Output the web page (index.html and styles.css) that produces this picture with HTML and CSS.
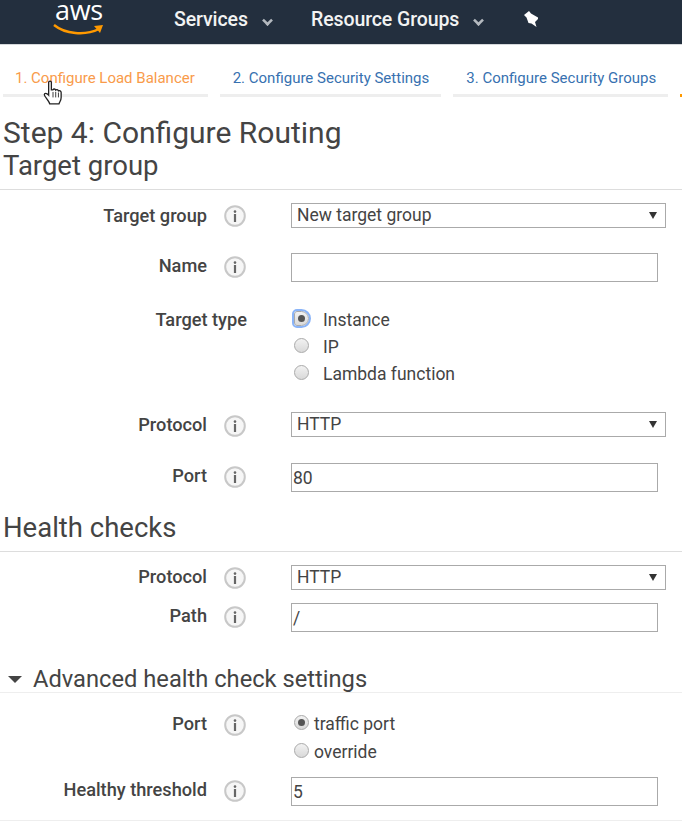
FILE: index.html
```html
<!doctype html>
<html>
<head>
<title>Step 4: Configure Routing</title>
<meta charset="utf-8" />
<link rel="stylesheet" href="styles.css">
</head>
<body>
<svg class="defs" width="0" height="0">
<symbol id="info" viewBox="0 0 22 22">
<circle cx="11" cy="11" r="9.8" fill="#f6f6f6" stroke="#c8c8c8" stroke-width="2"/>
<circle cx="11" cy="6.6" r="1.3" fill="#666"/>
<rect x="9.9" y="9" width="2.2" height="8" fill="#666"/>
</symbol>
</svg>

<header class="topbar">
<div class="logo">
<span class="logo-text">aws</span>
<svg class="smile" width="52" height="14" viewBox="0 0 52 14">
<path d="M1 2 C12 11 32 13 46 6" fill="none" stroke="#f90" stroke-width="2.4"/>
<path d="M41 3 L50 2 L47 10 Z" fill="#f90"/>
</svg>
</div>
<nav class="menu">
<a class="services">Services <i class="chev"></i></a>
<a class="groups">Resource Groups <i class="chev"></i></a>
<svg class="pin" width="16" height="18" viewBox="0 0 16 18">
<path d="M1 5 L6 1 L8 3.500 L15 7.500 L15 9 L12 12 L13.500 17 L8.500 13.500 L5.500 13 L3.500 7.500 Z" fill="#fff"/>
</svg>
</nav>
</header>

<ul class="tabs">
<li class="tab active">1. Configure Load Balancer</li>
<li class="tab second">2. Configure Security Settings</li>
<li class="tab third">3. Configure Security Groups</li>
<li class="tab rest"></li>
</ul>

<svg class="cursor" width="20" height="25" viewBox="0 0 18 23">
<path d="M5 2 C5 .8 7.500 .8 7.500 2 L7.500 9 L9 9 C9.500 8 11 8 11.500 9.300 C12 8.500 13.500 8.700 14 10 C15 9.500 16.500 10 16.500 11.500 L16.500 16 C16.500 19 15 20 14.500 22 L6 22 C5.500 19.500 1 15 1 13.500 C1 12 3 11.500 5 14 Z" fill="#fff" stroke="#222" stroke-width="1.200"/>
<path d="M9 11 V16 M11.500 11 V16 M14 11.500 V16" stroke="#222" stroke-width=".8" fill="none"/>
</svg>

<main>
<h1>Step 4: Configure Routing</h1>
<h2>Target group</h2>

<div class="row row-select">
<label>Target group</label>
<svg class="info"><use href="#info"/></svg>
<div class="select">New target group</div>
</div>

<div class="row row-name">
<label>Name</label>
<svg class="info"><use href="#info"/></svg>
<div class="input"></div>
</div>

<div class="row row-type">
<label class="wide">Target type</label>
<span></span>
<div class="radios">
<div class="radio-line"><i class="radio on focus"></i>Instance</div>
<div class="radio-line"><i class="radio"></i>IP</div>
<div class="radio-line"><i class="radio"></i>Lambda function</div>
</div>
</div>

<div class="row row-protocol">
<label>Protocol</label>
<svg class="info"><use href="#info"/></svg>
<div class="select">HTTP</div>
</div>

<div class="row row-port">
<label>Port</label>
<svg class="info"><use href="#info"/></svg>
<div class="input">80</div>
</div>

<h2 class="health">Health checks</h2>

<div class="row row-hc">
<label>Protocol</label>
<svg class="info"><use href="#info"/></svg>
<div class="select">HTTP</div>
</div>

<div class="row row-path">
<label>Path</label>
<svg class="info"><use href="#info"/></svg>
<div class="input">/</div>
</div>

<h3><i class="caret"></i>Advanced health check settings</h3>

<div class="row row-adv">
<label>Port</label>
<svg class="info"><use href="#info"/></svg>
<div class="radios tight">
<div class="radio-line"><i class="radio on"></i>traffic port</div>
<div class="radio-line"><i class="radio"></i>override</div>
</div>
</div>

<div class="row row-threshold">
<label>Healthy threshold</label>
<svg class="info"><use href="#info"/></svg>
<div class="input">5</div>
</div>

<div class="row-next">
<div class="input"></div>
</div>
</main>
</body>
</html>
```
FILE: styles.css
```css
html, body {
height: 828px;
overflow: hidden;
}

body {
background-color: #fff;
margin: 0;
padding: 0;
position: relative;
font-family: Roboto, "Liberation Sans", sans-serif;
color: #444;
}

.defs {
position: absolute;
}

.topbar {
display: flex;
align-items: center;
height: 44px;
background-color: #232f3e;
border-bottom: 1px solid #d5d8db;
}

.logo {
position: relative;
width: 174px;
height: 44px;
}

.logo-text {
position: absolute;
left: 55px;
top: -8px;
font-family: "Open Sans", sans-serif;
font-size: 27px;
line-height: 36px;
color: #fff;
letter-spacing: -.3px;
}

.smile {
position: absolute;
left: 53px;
top: 23px;
}

.menu {
display: flex;
align-items: center;
margin-bottom: 6px;
font-size: 19.5px;
font-weight: 500;
color: #f2f3f3;
letter-spacing: -.1px;
}

.menu a {
display: flex;
align-items: center;
}

.services {
width: 137px;
}

.groups {
width: 212px;
}

.chev {
display: block;
width: 6px;
height: 6px;
margin: 2px 0 0 15px;
border-right: 3px solid #b4b9bf;
border-bottom: 3px solid #b4b9bf;
transform: rotate(45deg) scale(.85);
}

.tabs {
display: flex;
list-style: none;
margin: 0;
padding: 0 0 0 3px;
height: 52px;
}

.tab {
box-sizing: border-box;
height: 52px;
padding: 24px 0 0 13px;
border-bottom: 3px solid #eee;
margin-right: 12px;
font-size: 15px;
line-height: 18px;
color: #3771b0;
white-space: nowrap;
}

.tab.active {
width: 205px;
padding-left: 12px;
color: #f99b4a;
}

.tab.second {
width: 222px;
}

.tab.third {
width: 215px;
}

.tab.rest {
width: 2px;
margin: 0;
padding: 0;
border-bottom-color: #f90;
}

.cursor {
position: absolute;
left: 43px;
top: 80px;
}

main {
padding-top: 18px;
}

h1 {
margin: 0 0 0 3px;
font-size: 30px;
font-weight: 400;
line-height: 35px;
}

h2 {
margin: 0;
padding-left: 3px;
height: 39px;
font-size: 27.5px;
font-weight: 400;
line-height: 32px;
border-bottom: 1px solid #ddd;
}

h2.health {
margin-top: 16px;
height: 43px;
line-height: 40px;
}

h3 {
display: flex;
align-items: center;
margin: 33px 0 0;
padding: 1px 0 0 8px;
height: 26px;
font-size: 23.7px;
font-weight: 400;
line-height: 29px;
border-bottom: 1px solid #eee;
}

.caret {
width: 0;
height: 0;
margin-right: 11px;
border-left: 7px solid transparent;
border-right: 7px solid transparent;
border-top: 7px solid #444;
}

.row {
display: grid;
grid-template-columns: 207px 84px 1fr;
align-items: start;
font-size: 17.5px;
}

label {
padding-top: 1px;
text-align: right;
font-size: 18.2px;
font-weight: 500;
line-height: 24px;
white-space: nowrap;
}

label.wide {
margin-right: -40px;
}

.row-adv label {
padding-top: 2px;
}

.row-hc label {
padding-top: 0;
}

.info {
width: 22px;
height: 22px;
margin: 3px 0 0 17px;
}

.row-select .info,
.row-hc .info {
margin-top: 2px;
}

.row-adv .info {
margin-top: 4px;
}

.select {
box-sizing: border-box;
position: relative;
width: 375px;
height: 25px;
padding-left: 5px;
border: 1px solid #aaa;
line-height: 23px;
}

.select::after {
content: "";
position: absolute;
right: 8px;
top: 8px;
border-left: 4px solid transparent;
border-right: 4px solid transparent;
border-top: 7px solid #333;
}

.input {
box-sizing: border-box;
width: 367px;
height: 29px;
padding-left: 1px;
border: 1px solid #aaa;
line-height: 28px;
}

.radios {
line-height: 27px;
}

.radio-line {
display: flex;
align-items: center;
height: 27px;
}

.radio {
box-sizing: border-box;
display: block;
position: relative;
width: 15px;
height: 15px;
margin: -4px 14px 0 3px;
border-radius: 50%;
border: 1px solid #aaa;
background: linear-gradient(#f2f2f2, #d9d9d9);
}

.radio.on::after {
content: "";
position: absolute;
left: 3px;
top: 3px;
width: 7px;
height: 7px;
border-radius: 50%;
background-color: #555;
}

.radio.focus {
outline: 2px solid #8ab4f8;
outline-offset: 0;
border-radius: 3px 50% 50% 3px;
}

.tight .radio {
margin-right: 5px;
}

.tight .radio-line {
height: 28px;
}

.row-select {
margin-top: 13px;
}

.row-name {
margin-top: 25px;
}

.row-type {
margin-top: 25px;
}

.row-protocol {
margin-top: 24px;
}

.row-port {
margin-top: 26px;
}

.row-hc {
margin-top: 13px;
}

.row-path {
margin-top: 13px;
}

.row-adv {
margin-top: 17px;
}

.row-threshold {
margin-top: 11px;
}

.row-next {
margin-top: -1px;
height: 8px;
position: relative;
}

.row-next::before {
content: "";
display: block;
height: 1px;
margin-top: 15px;
background-color: #eee;
}

.row-next .input {
position: absolute;
left: 291px;
top: 13px;
}
```
